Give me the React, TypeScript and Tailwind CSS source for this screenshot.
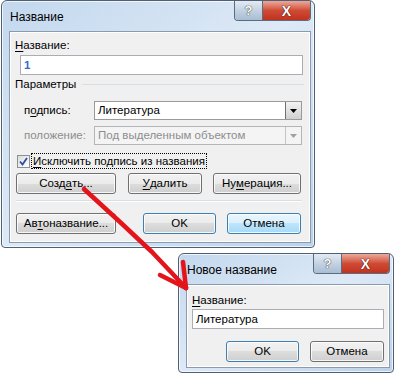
import type { ReactNode } from "react";

const font = { fontFamily: '"Liberation Sans", Arial, sans-serif' };

function U({ children }: { children: ReactNode }) {
  return <span className="underline underline-offset-2">{children}</span>;
}

function CaptionButtons() {
  return (
    <div className="flex h-[20px] rounded-b-[4px] border border-t-0 border-[#5b6c80] overflow-hidden">
      <div className="w-[28px] h-full flex items-center justify-center bg-gradient-to-b from-[#e3ebf4] via-[#c3d2e2] to-[#a9bdd3] border-r border-[#5b6c80]">
        <span className="text-[13px] font-bold text-white leading-none [text-shadow:0_0_1px_#333,0_0_1px_#333]">?</span>
      </div>
      <div className="w-[47px] h-full flex items-center justify-center bg-gradient-to-b from-[#e9a99c] via-[#cf4b35] to-[#c0321e]">
        <span className="text-[14px] font-bold text-white leading-none [text-shadow:0_0_1px_#400,0_0_1px_#400]">X</span>
      </div>
    </div>
  );
}

function Win({
  title,
  w,
  h,
  children,
}: {
  title: string;
  w: string;
  h: string;
  children: ReactNode;
}) {
  return (
    <div
      className={`${w} ${h} flex flex-col rounded-t-[6px] rounded-b-[4px] border border-[#4f6074] bg-gradient-to-br from-[#c3d8ee] via-[#dde9f6] to-[#bad2ea] shadow-[inset_0_0_0_1px_rgba(255,255,255,0.7)]`}
    >
      <div className="h-[30px] flex items-start justify-between pl-[8px] pr-[3px]">
        <div className="pt-[8px] text-[12px] text-black leading-[16px]">{title}</div>
        <CaptionButtons />
      </div>
      <div className="flex-1 mx-[7px] mr-[3px] mb-[4px] border border-[#8a9bb0] bg-[#f0f0f0] shadow-[inset_0_0_0_1px_#fff]">
        {children}
      </div>
    </div>
  );
}

function Btn({
  children,
  w,
  kind = "normal",
}: {
  children: ReactNode;
  w: string;
  kind?: "normal" | "default" | "hover";
}) {
  const border =
    kind === "normal" ? "border-[#707070]" : "border-[#3c7fb1]";
  const fill =
    kind === "hover"
      ? "bg-[linear-gradient(#eaf6fd_0%,#d9f0fc_50%,#bee6fd_50%,#a7d9f5_100%)]"
      : "bg-[linear-gradient(#f2f2f2_0%,#ebebeb_50%,#dddddd_50%,#cfcfcf_100%)]";
  return (
    <div
      className={`${w} h-[21px] rounded-[3px] border ${border} ${fill} flex items-center justify-center text-[11.5px] text-black shadow-[inset_0_0_0_1px_rgba(255,255,255,0.8)]`}
    >
      {children}
    </div>
  );
}

function Combo({ value, disabled }: { value: string; disabled?: boolean }) {
  return (
    <div
      className={`w-[208px] h-[19px] flex border ${
        disabled ? "border-[#b5b5b5] bg-[#f4f4f4] text-[#8d8d8d]" : "border-[#9a9a9a] bg-white text-black"
      }`}
    >
      <div className="flex-1 pl-[3px] text-[11.5px] leading-[17px]">{value}</div>
      <div
        className={`w-[16px] h-full flex items-center justify-center border-l ${
          disabled
            ? "border-[#c4c4c4] bg-[#f4f4f4]"
            : "border-[#707070] bg-gradient-to-b from-[#f3f3f3] to-[#d0d0d0]"
        }`}
      >
        <svg width="7" height="4" viewBox="0 0 7 4">
          <path d="M0 0h7L3.5 4z" fill={disabled ? "#a0a0a0" : "#000"} />
        </svg>
      </div>
    </div>
  );
}

function Arrow() {
  return (
    <svg className="absolute inset-0 pointer-events-none" width="400" height="376" viewBox="0 0 400 376">
      <g stroke="#e4141b" strokeWidth="4.5" strokeLinecap="round" strokeLinejoin="round" fill="none">
        <path d="M84 189 L120 222 L152 252 L186 288" />
        <path d="M160 275 L186 288" />
        <path d="M183 262 L186 288" />
      </g>
    </svg>
  );
}

export default function App() {
  return (
    <div className="relative w-[400px] h-[376px] bg-white overflow-hidden" style={font}>
      <div className="pl-[1px]">
        <Win title="Название" w="w-[314px]" h="h-[248px]">
          <div className="pl-[5px] pt-[5px] text-[11.5px] text-black">
            <div className="leading-[16px]">
              <U>Н</U>азвание:
            </div>
            <div className="ml-[5px] mt-[2px] w-[283px] h-[20px] border border-[#abadb3] bg-white pl-[3px] leading-[18px] text-[#2f6fc8] font-bold">
              1
            </div>
            <div className="mt-[1px] flex items-center gap-[6px] pr-[6px]">
              <span className="leading-[16px]">Параметры</span>
              <div className="flex-1 h-px bg-[#d5dfe5]" />
            </div>
            <div className="mt-[9px] flex items-center">
              <span className="w-[79px] pl-[9px]">
                п<U>о</U>дпись:
              </span>
              <Combo value="Литература" />
            </div>
            <div className="mt-[6px] flex items-center text-[#8d8d8d]">
              <span className="w-[79px] pl-[9px]">положение:</span>
              <Combo value="Под выделенным объектом" disabled />
            </div>
            <div className="mt-[9px] ml-[2px] flex items-center gap-[2px]">
              <div className="w-[13px] h-[13px] border border-[#8f8f8f] bg-gradient-to-br from-[#dcdcdc] to-white flex items-center justify-center">
                <svg width="9" height="9" viewBox="0 0 9 9">
                  <path d="M1 4.5 L3.5 7.5 L8 1" stroke="#2a4fa0" strokeWidth="1.8" fill="none" />
                </svg>
              </div>
              <span className="px-[1px] leading-[14px] outline outline-1 outline-dotted outline-black">
                <U>И</U>сключить подпись из названия
              </span>
            </div>
            <div className="mt-[5px] ml-[1px] flex gap-[12px]">
              <Btn w="w-[100px]">
                Созд<U>а</U>ть...
              </Btn>
              <div className="flex gap-[11px]">
                <Btn w="w-[74px]">
                  <U>У</U>далить
                </Btn>
                <Btn w="w-[88px]">
                  Ну<U>м</U>ерация...
                </Btn>
              </div>
            </div>
            <div className="mt-[6px] ml-[1px] w-[286px] h-px bg-[#d5dfe5] shadow-[0_1px_0_#fff]" />
            <div className="mt-[12px] ml-[1px] flex">
              <Btn w="w-[100px]">
                Ав<U>т</U>оназвание...
              </Btn>
              <div className="ml-[27px] flex gap-[11px]">
                <Btn w="w-[73px]" kind="default">
                  OK
                </Btn>
                <Btn w="w-[74px]" kind="hover">
                  Отмена
                </Btn>
              </div>
            </div>
          </div>
        </Win>
      </div>
      <div className="ml-[178px] mt-[5px]">
        <Win title="Новое название" w="w-[216px]" h="h-[120px]">
          <div className="pl-[5px] pt-[7px] text-[11.5px] text-black">
            <div className="leading-[16px]">
              <U>Н</U>азвание:
            </div>
            <div className="mt-[1px] w-[192px] h-[20px] border border-[#abadb3] bg-white pl-[3px] leading-[18px]">
              Литература
            </div>
            <div className="mt-[12px] ml-[34px] flex gap-[11px]">
              <Btn w="w-[73px]" kind="default">
                OK
              </Btn>
              <Btn w="w-[74px]">Отмена</Btn>
            </div>
          </div>
        </Win>
      </div>
      <Arrow />
    </div>
  );
}
